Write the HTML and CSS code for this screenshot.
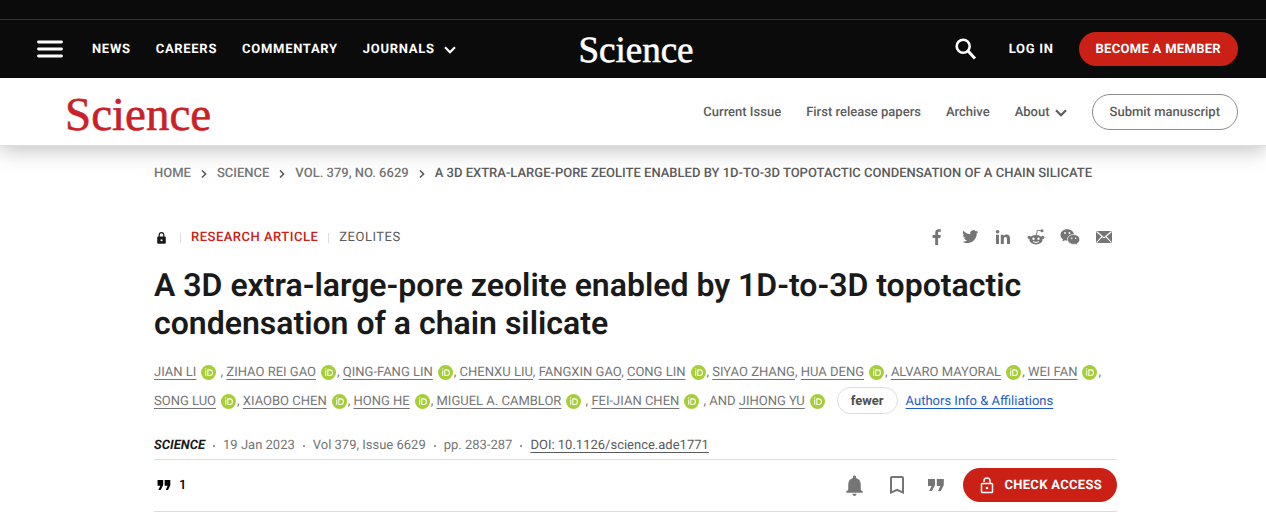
FILE: index.html
```html
<!DOCTYPE html>
<html lang="en">
<head>
<meta charset="utf-8">
<meta name="viewport" content="width=device-width, initial-scale=1">
<title>A 3D extra-large-pore zeolite | Science</title>
<link rel="stylesheet" href="styles.css">
</head>
<body>
<svg class="defs" aria-hidden="true">
  <symbol id="orcid" viewBox="0 0 16 16"><circle cx="8" cy="8" r="8" fill="#a6ce39"/><path d="M5 5.9v5.6M7.3 5.2h1.9a2.9 2.9 0 0 1 0 5.9H7.3z" fill="none" stroke="#fff" stroke-width="1.1"/><circle cx="5" cy="4.1" r=".75" fill="#fff"/></symbol>
  <symbol id="quotes" viewBox="0 0 16 12"><path d="M0 0h7v6L4 12H1.200L3.600 7H0zM8.800 0h7v6l-3 6H10l2.400-5H8.800z"/></symbol>
  <symbol id="down" viewBox="0 0 12 8"><path d="M1 1.200l5 5 5-5" fill="none" stroke="currentColor" stroke-width="2.200"/></symbol>
</svg>
<header>
  <div class="topbar"></div>
  <div class="masthead">
    <nav class="primary" aria-label="Primary">
      <button class="menu" aria-label="Menu"><svg width="26" height="18" viewBox="0 0 26 18"><path d="M1.500 2h23M1.500 9h23M1.500 16h23" stroke="#fff" stroke-width="2.800" stroke-linecap="round"/></svg></button>
      <a href="#">NEWS</a><a href="#">CAREERS</a><a href="#">COMMENTARY</a>
      <a class="journals" href="#">JOURNALS <svg width="12" height="8"><use href="#down"/></svg></a>
    </nav>
    <a class="logo" href="#">Science</a>
    <div class="account">
      <button class="search" aria-label="Search"><svg width="22" height="22" viewBox="0 0 22 22"><g fill="none" stroke="#fff"><circle cx="8.200" cy="8.200" r="6.500" stroke-width="2.600"/><path d="M12.800 12.800l7.200 7.700" stroke-width="3"/></g></svg></button>
      <a href="#">LOG IN</a>
      <a class="member" href="#">BECOME A MEMBER</a>
    </div>
  </div>
  <div class="journalbar">
    <a class="journal-logo" href="#">Science</a>
    <nav class="secondary" aria-label="Journal">
      <a href="#">Current Issue</a><a href="#">First release papers</a><a href="#">Archive</a>
      <a class="about" href="#">About <svg width="12" height="8"><use href="#down"/></svg></a>
      <a class="submit" href="#">Submit manuscript</a>
    </nav>
  </div>
</header>
<main>
  <nav class="crumbs" aria-label="Breadcrumb">
    <a href="#">HOME</a><svg width="6" height="8" viewBox="0 0 6 8"><path d="M1 .5L4.600 4 1 7.500"/></svg>
    <a href="#">SCIENCE</a><svg width="6" height="8" viewBox="0 0 6 8"><path d="M1 .5L4.600 4 1 7.500"/></svg>
    <a href="#">VOL. 379, NO. 6629</a><svg width="6" height="8" viewBox="0 0 6 8"><path d="M1 .5L4.600 4 1 7.500"/></svg>
    <span class="current">A 3D EXTRA-LARGE-PORE ZEOLITE ENABLED BY 1D-TO-3D TOPOTACTIC CONDENSATION OF A CHAIN SILICATE</span>
  </nav>
  <div class="meta">
    <div class="kind">
      <svg class="lock" width="9" height="12" viewBox="0 0 9 12"><path d="M2.200 5V3a2.300 2.300 0 0 1 4.600 0v2" fill="none" stroke="#1a1a1a" stroke-width="1.200"/><rect x=".2" y="4.600" width="8.600" height="7.200" rx="1" fill="#1a1a1a"/><circle cx="4.500" cy="8.200" r="1" fill="#fff"/></svg>
      <span class="type">RESEARCH ARTICLE</span>
      <span class="topic">ZEOLITES</span>
    </div>
    <div class="share">
      <a href="#" aria-label="Facebook"><svg width="18" height="18" viewBox="0 0 18 18"><path d="M7.200 17V9.900H4.600V7h2.600V4.900C7.200 2.400 8.600 1.200 10.800 1.200c1 0 1.800.1 2 .1v2.500h-1.400c-1.100 0-1.300.5-1.300 1.300V7h2.700l-.4 2.900h-2.300V17z"/></svg></a>
      <a href="#" aria-label="Twitter"><svg width="18" height="18" viewBox="-2 -1 27 27"><path d="M23.950 4.570a10 10 0 0 1-2.820.770 4.960 4.960 0 0 0 2.160-2.720c-.950.560-2 .960-3.120 1.180a4.920 4.920 0 0 0-8.380 4.480C7.690 8.090 4.070 6.130 1.640 3.160a4.900 4.900 0 0 0 1.520 6.570 4.900 4.900 0 0 1-2.230-.610v.060a4.920 4.920 0 0 0 3.950 4.830 5 5 0 0 1-2.210.080 4.940 4.940 0 0 0 4.600 3.420A9.870 9.870 0 0 1 0 19.540a13.990 13.990 0 0 0 7.550 2.210c9.050 0 14-7.500 14-13.980 0-.210 0-.420-.020-.630a9.940 9.940 0 0 0 2.460-2.550z"/></svg></a>
      <a href="#" aria-label="LinkedIn"><svg width="18" height="18" viewBox="0 0 18 18"><circle cx="3.600" cy="3.800" r="1.800"/><path d="M2 6.800h3V16H2zM6.800 6.800h2.900V8c.5-.9 1.500-1.500 2.900-1.500 2.700 0 3.400 1.700 3.400 4.300V16h-3v-4.600c0-1.300-.2-2.400-1.500-2.400S9.800 10 9.800 11.400V16h-3z"/></svg></a>
      <a href="#" aria-label="Reddit"><svg width="18" height="18" viewBox="0 0 18 18"><ellipse cx="9" cy="11.700" rx="6.600" ry="4.800"/><circle cx="2.300" cy="9.400" r="1.700"/><circle cx="15.700" cy="9.400" r="1.700"/><path d="M9.200 7.500l1.200-5.300 4.200.6" fill="none" stroke="#757575" stroke-width=".9"/><circle cx="15" cy="2.800" r="1.500"/><g fill="#fff"><circle cx="6.500" cy="10.700" r="1.200"/><circle cx="11.500" cy="10.700" r="1.200"/></g><path d="M6 13.600q3 1.800 6 0" fill="none" stroke="#fff"/></svg></a>
      <a href="#" aria-label="WeChat"><svg width="20" height="18" viewBox="0 0 20 18"><path d="M7.200 1.200C3.300 1.200.5 3.700.5 6.900c0 1.800.9 3.300 2.500 4.400l-.6 2.200L5 12.200c.7.200 1.500.3 2.200.3 3.800 0 6.800-2.500 6.800-5.600S11.100 1.200 7.200 1.200z"/><path d="M13.600 6.500c-3.400 0-6.100 2.200-6.100 4.900s2.700 5 6.100 5c.7 0 1.300-.1 1.900-.2l2.300 1.200-.5-1.900c1.500-.9 2.400-2.400 2.400-4.100 0-2.700-2.700-4.900-6.100-4.900z" stroke="#fff" stroke-width=".8"/><g fill="#fff"><circle cx="5" cy="5" r=".9"/><circle cx="9.400" cy="5" r=".9"/><circle cx="11.700" cy="10.300" r=".8"/><circle cx="15.600" cy="10.300" r=".8"/></g></svg></a>
      <a href="#" aria-label="Email"><svg width="18" height="18" viewBox="0 0 18 18"><rect x="1" y="3" width="16" height="12"/><path d="M1.500 3.500l7.500 6.500L16.500 3.500M1.500 14.700l5.300-5.800M16.500 14.700l-5.300-5.800" fill="none" stroke="#fff" stroke-width="1.100"/></svg></a>
    </div>
  </div>
  <h1>A 3D extra-large-pore zeolite enabled by 1D-to-3D topotactic condensation of a chain silicate</h1>
  <div class="authors">
    <a href="#">JIAN LI</a><svg class="orcid"><use href="#orcid"/></svg> , <a href="#">ZIHAO REI GAO</a><svg class="orcid"><use href="#orcid"/></svg>, <a href="#">QING-FANG LIN</a><svg class="orcid"><use href="#orcid"/></svg>, <a href="#">CHENXU LIU</a>, <a href="#">FANGXIN GAO</a>, <a href="#">CONG LIN</a><svg class="orcid"><use href="#orcid"/></svg>, <a href="#">SIYAO ZHANG</a>, <a href="#">HUA DENG</a><svg class="orcid"><use href="#orcid"/></svg>, <a href="#">ALVARO MAYORAL</a><svg class="orcid"><use href="#orcid"/></svg>, <a href="#">WEI FAN</a><svg class="orcid"><use href="#orcid"/></svg>, <a href="#">SONG LUO</a><svg class="orcid"><use href="#orcid"/></svg>, <a href="#">XIAOBO CHEN</a><svg class="orcid"><use href="#orcid"/></svg>, <a href="#">HONG HE</a><svg class="orcid"><use href="#orcid"/></svg>, <a href="#">MIGUEL A. CAMBLOR</a><svg class="orcid"><use href="#orcid"/></svg> , <a href="#">FEI-JIAN CHEN</a><svg class="orcid"><use href="#orcid"/></svg> , AND <a href="#">JIHONG YU</a><svg class="orcid"><use href="#orcid"/></svg><button class="fewer">fewer</button><a class="info" href="#">Authors Info &amp; Affiliations</a>
  </div>
  <div class="issue">
    <span class="name">SCIENCE</span><i></i><span>19 Jan 2023</span><i></i><span>Vol 379, Issue 6629</span><i></i><span>pp. 283-287</span><i></i><a href="#">DOI: 10.1126/science.ade1771</a>
  </div>
  <div class="toolbar">
    <a class="cites" href="#"><svg width="14" height="10" viewBox="0 0 16 12"><use href="#quotes"/></svg><span>1</span></a>
    <div class="tools">
      <button aria-label="Alerts"><svg width="25" height="25" viewBox="0 0 24 24"><path d="M12 22c1.100 0 2-.9 2-2h-4c0 1.100.9 2 2 2zm6-6v-5c0-3.070-1.640-5.640-4.500-6.320V4c0-.83-.67-1.500-1.500-1.500s-1.500.67-1.500 1.500v.68C7.630 5.360 6 7.920 6 11v5l-2 2v1h16v-1l-2-2z"/></svg></button>
      <button aria-label="Bookmark"><svg width="24" height="24" viewBox="0 0 24 24"><path d="M17 3H7c-1.100 0-2 .9-2 2v16l7-3 7 3V5c0-1.100-.9-2-2-2zm0 15l-5-2.180L7 18V5h10v13z"/></svg></button>
      <button class="cite" aria-label="Cite"><svg width="16" height="12"><use href="#quotes"/></svg></button>
      <a class="access" href="#"><svg width="14" height="17" viewBox="0 0 14 17"><g fill="none" stroke="#fff" stroke-width="1.500"><rect x="1.500" y="6.500" width="11" height="9" rx=".8"/><path d="M4 5V4a3 3 0 0 1 6 0v2.500"/></g><circle cx="7" cy="11" r="1.300"/></svg><span>CHECK ACCESS</span></a>
    </div>
  </div>
</main>
</body>
</html>
```
FILE: styles.css
```css
* { box-sizing: border-box; }
body { margin: 0; background: #fff; color: #757575; font: 13px/20px Roboto, "Liberation Sans", sans-serif; text-rendering: geometricPrecision; }
a { color: inherit; text-decoration: none; }
button { border: 0; padding: 0; background: none; color: inherit; font: inherit; cursor: pointer; }
svg { flex: none; fill: currentColor; }
.defs { position: absolute; width: 0; height: 0; }
header { background: #fff; box-shadow: 0 4px 20px rgba(0, 0, 0, .25); }
.topbar { height: 20px; background: #0b0b0b; border-bottom: 1px solid #333; }
.masthead { display: grid; grid-template-columns: 1fr auto 1fr; align-items: center; height: 58px; padding: 0 28px 0 37px; background: #0b0b0b; color: #fff; font-weight: 700; letter-spacing: .7px; }
.primary { display: flex; align-items: center; gap: 25px; }
.primary a, .account a, .secondary a { padding-top: 2px; }
.menu { display: flex; margin-right: 4px; }
.journals { display: flex; align-items: center; gap: 9px; }
.masthead .logo { padding: 4px 3px 0 0; font: 37px/52px "Liberation Serif", serif; letter-spacing: 0; -webkit-text-stroke: .6px; }
.account { display: flex; align-items: center; justify-content: flex-end; gap: 25px; }
.search { display: flex; margin-right: 7px; }
.account .member { padding: 8px 17px 6px; border-radius: 17px; background: #ca2015; letter-spacing: .3px; }
.journalbar { display: flex; align-items: center; justify-content: space-between; height: 68px; padding: 0 28px 0 65px; border-bottom: 1px solid #ddd; }
.journal-logo { padding-top: 6px; color: #c92127; font: 47px/60px "Liberation Serif", serif; -webkit-text-stroke: .6px; }
.secondary { display: flex; align-items: center; gap: 25px; color: #5c5c5c; font-weight: 500; }
.about { display: flex; align-items: center; gap: 5px; }
.secondary .submit { padding: 8px 17px 6px; border: 1px solid #8a8a8a; border-radius: 18px; }
main { padding: 18px 149px 0 154px; }
.crumbs { display: flex; align-items: center; gap: 10px; font-weight: 500; white-space: nowrap; }
.crumbs svg { fill: none; stroke: #555; stroke-width: 1.5; }
.current { color: #5a5a5a; }
.meta { display: flex; align-items: center; justify-content: space-between; height: 18px; margin-top: 44px; }
.kind { display: flex; align-items: center; padding-top: 2px; letter-spacing: .5px; }
.lock { margin: 0 14px 0 3px; }
.type, .topic { padding: 0 10px; border-left: 1px solid #ddd; line-height: 10px; }
.type { color: #ca2015; font-weight: 500; }
.topic { color: #5a5a5a; }
.share { display: flex; align-items: center; gap: 15px; padding-right: 4px; }
.share a { display: flex; }
h1 { margin: 20px 0 0; color: #1a1a1a; font-size: 32px; line-height: 38px; font-weight: 600; }
.authors { margin-top: 17px; line-height: 28px; }
.authors a, .issue a { text-decoration: underline; text-decoration-thickness: 1px; text-underline-offset: 3px; text-decoration-skip-ink: none; }
.orcid { width: 15px; height: 15px; margin: 0 1px 0 5px; vertical-align: -4px; }
.fewer { height: 27px; margin: 0 8px 0 11px; padding: 0 13px; border: 1px solid #ddd; border-radius: 14px; color: #4d4d4d; font-weight: 700; line-height: 20px; }
.authors .info { color: #1b5cc4; }
.issue { display: flex; align-items: center; margin-top: 20px; padding-bottom: 3px; }
.issue i { width: 2px; height: 2px; margin: 0 8px; border-radius: 1px; background: #757575; }
.issue a { color: #5a5a5a; }
.name { color: #1a1a1a; font-weight: 700; font-style: italic; }
.toolbar { display: flex; align-items: center; justify-content: space-between; height: 53px; border: solid #ddd; border-width: 1px 0; }
.toolbar span { padding-top: 2px; }
.cites { display: flex; align-items: center; gap: 8px; padding-left: 3px; color: #000; font-weight: 500; }
.tools { display: flex; align-items: center; gap: 18px; }
.tools button { display: flex; }
.tools .cite { justify-content: center; width: 18px; }
.access { display: flex; align-items: center; gap: 10px; height: 34px; padding: 0 15px 0 17px; border-radius: 17px; background: #ca2015; color: #fff; font-weight: 700; letter-spacing: .3px; }
```
